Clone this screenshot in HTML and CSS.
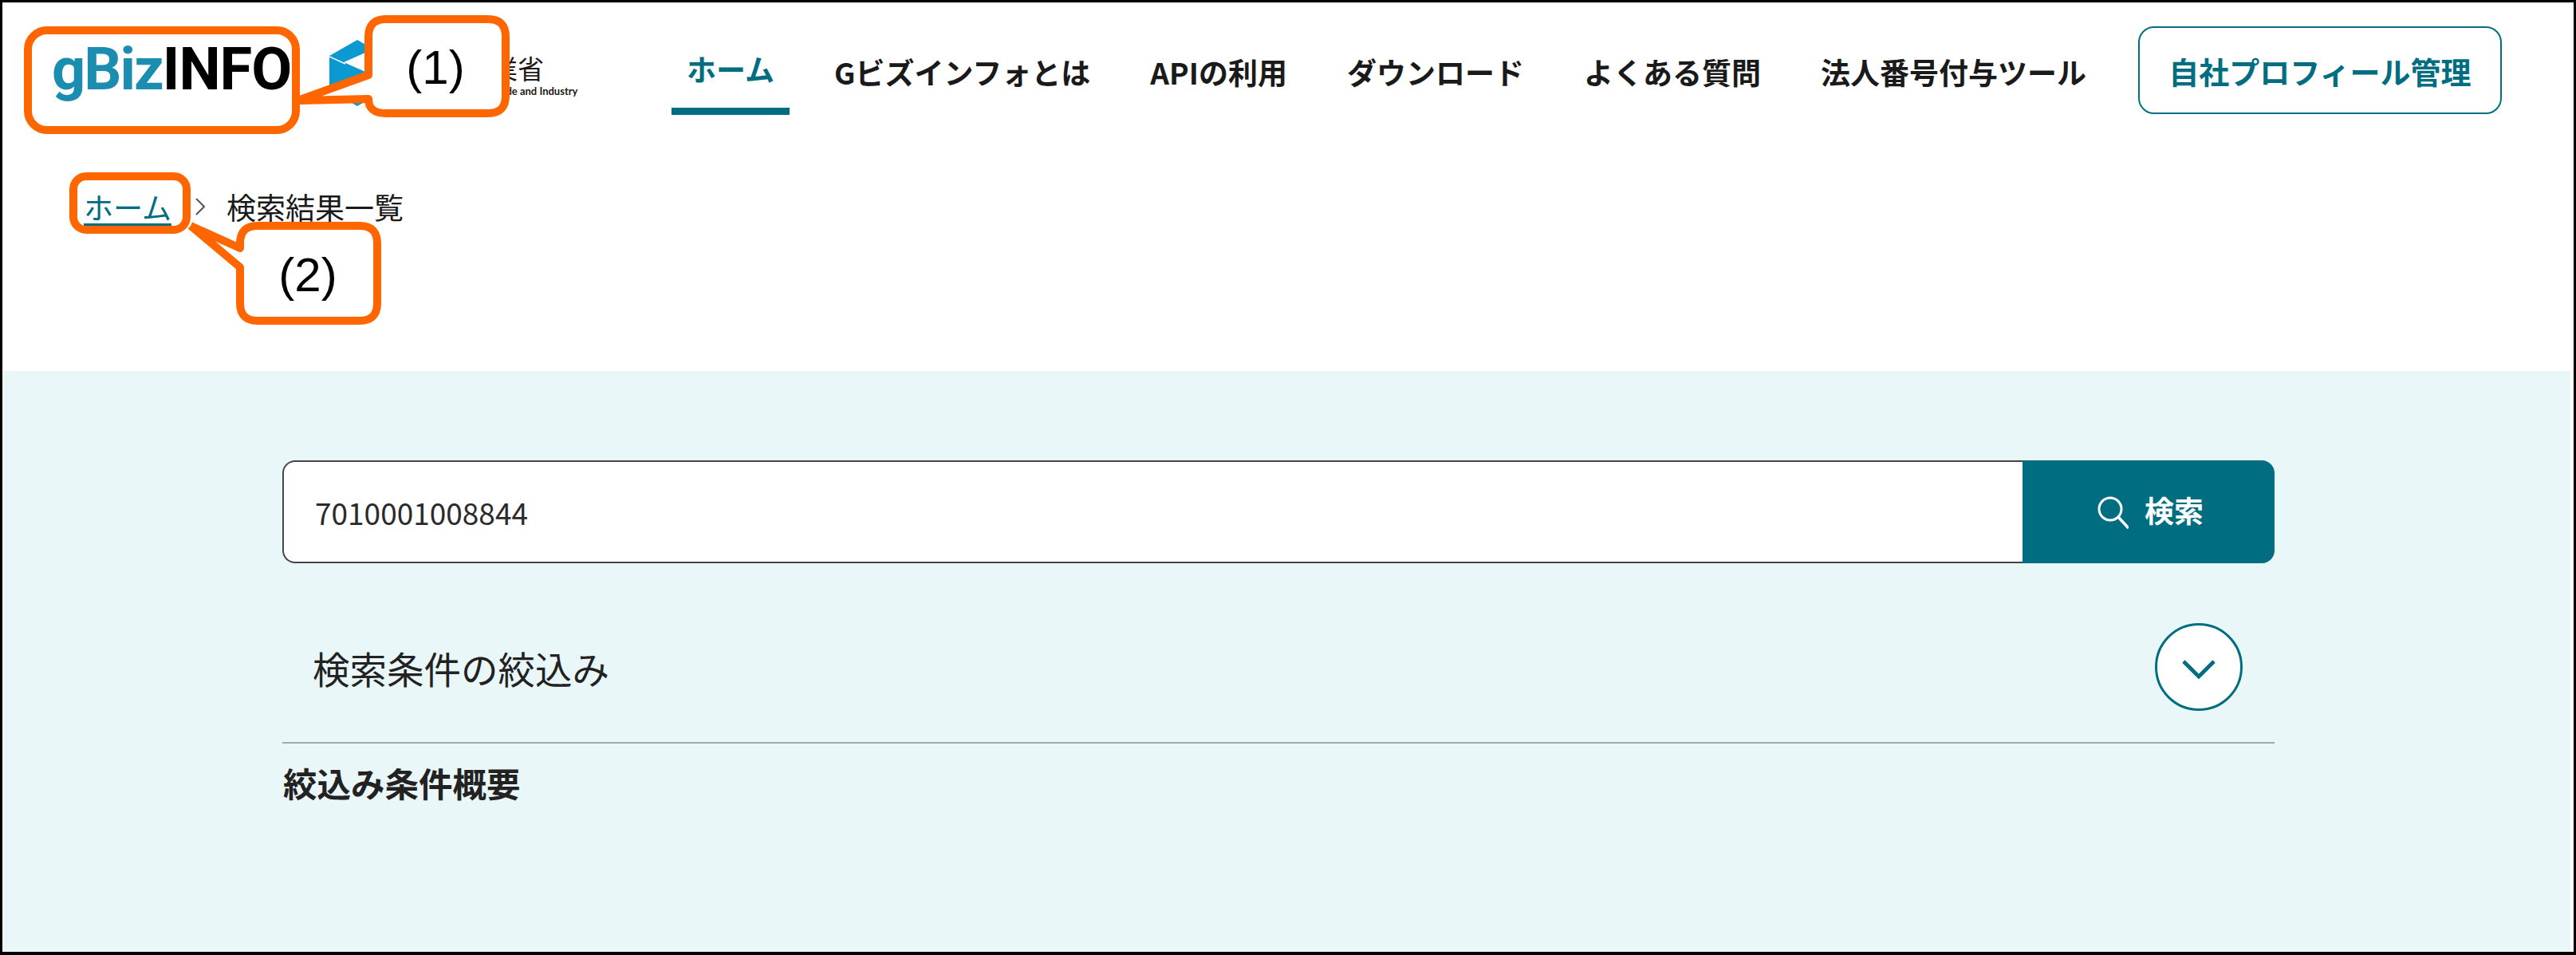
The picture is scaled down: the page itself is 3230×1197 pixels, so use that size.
FILE: index.html
```html
<!DOCTYPE html>
<html lang="ja">
<head>
<meta charset="utf-8">
<title>検索結果一覧</title>
<link rel="stylesheet" href="styles.css">
</head>
<body>
<div class="frame">
  <header class="header">
    <div class="logos">
      <div class="gbiz"><span class="gbiz-a">gBiz</span><span class="gbiz-b">INFO</span></div>
      <div class="meti">
        <svg class="cube" viewBox="0 0 100 84" width="100" height="84" aria-hidden="true">
          <path fill="#0a9ad1" d="M35 0 L70 20 V63 L35 83 L0 63 V20Z"/>
          <path fill="#fff" d="M18 28 L45 16 L70 16 V40 L45 40Z"/>
          <path fill="none" stroke="#fff" stroke-width="1.5" d="M0 21 L20 30"/>
        </svg>
        <div class="meti-text">
          <div class="meti-ja">経済産業省</div>
          <div class="meti-en">Ministry of Economy, Trade and Industry</div>
        </div>
      </div>
    </div>
    <nav class="nav">
      <a class="nav-item active">ホーム</a>
      <a class="nav-item">Gビズインフォとは</a>
      <a class="nav-item">APIの利用</a>
      <a class="nav-item">ダウンロード</a>
      <a class="nav-item">よくある質問</a>
      <a class="nav-item">法人番号付与ツール</a>
    </nav>
    <a class="profile">自社プロフィール管理</a>
  </header>
  <div class="crumbs">
    <a class="crumb-link">ホーム</a>
    <svg class="crumb-sep" viewBox="0 0 12 22" width="12" height="22" aria-hidden="true"><path d="M1 1 L11 11 L1 21" fill="none" stroke="#555" stroke-width="2"/></svg>
    <span class="crumb-current">検索結果一覧</span>
  </div>
  <main class="band">
    <div class="panel">
      <div class="search">
        <div class="search-input">7010001008844</div>
        <button class="search-btn">
          <svg viewBox="0 0 40 44" width="40" height="44" aria-hidden="true"><circle cx="17" cy="18" r="14" fill="none" stroke="#fff" stroke-width="3"/><path d="M27 28 L40 42" stroke="#fff" stroke-width="3.5" fill="none"/></svg>
          <span class="search-label">検索</span>
        </button>
      </div>
      <div class="filter">
        <span class="filter-title">検索条件の絞込み</span>
        <span class="filter-toggle">
          <svg viewBox="0 0 44 26" width="42" height="25" aria-hidden="true"><path d="M2 3 L22 23 L42 3" fill="none" stroke="#006e80" stroke-width="5"/></svg>
        </span>
      </div>
      <h2 class="summary">絞込み条件概要</h2>
    </div>
  </main>
  <svg class="notes" viewBox="0 0 3230 1197" width="3230" height="1197">
    <g class="note-shape">
      <rect class="note-box" x="35" y="38" width="336" height="125" rx="24"/>
      <rect class="note-box" x="92" y="221" width="142" height="67" rx="16"/>
      <path d="M376 125 L462 94 V46 Q462 24 484 24 H612 Q634 24 634 46 V120 Q634 142 612 142 H484 Q462 142 462 124 L376 126"/>
      <path d="M239 283 L301 311 V305 Q301 283 323 283 H451 Q473 283 473 305 V380 Q473 402 451 402 H323 Q301 402 301 380 V335 L239 283"/>
    </g>
    <text class="note-label" x="546" y="105">(1)</text>
    <text class="note-label" x="386" y="365">(2)</text>
  </svg>
</div>
</body>
</html>
```
FILE: styles.css
```css
* { box-sizing: border-box; }
html, body { margin: 0; padding: 0; background: #fff; }
body { font-family: "Noto Sans CJK JP", "Noto Sans", sans-serif; color: #1a1a1a; }
.frame {
  position: relative;
  width: 3230px;
  height: 1197px;
  border: 3px solid #000;
  border-bottom-width: 4px;
  padding-right: 4px;
  display: flex;
  flex-direction: column;
  overflow: hidden;
  background: #fff;
}
.header {
  display: flex;
  align-items: flex-start;
  height: 141px;
  border-top: 2px solid #eceeee;
  padding: 28px 0 0 59px;
}
.logos { display: flex; width: 780px; gap: 41px; }
.gbiz {
  font-family: "Roboto", sans-serif;
  font-weight: 700;
  font-size: 74px;
  line-height: 108px;
  width: 310px;
  padding-left: 3px;
  white-space: nowrap;
}
.gbiz-a { color: #1b8db0; letter-spacing: -2px; }
.gbiz-b { color: #000; letter-spacing: -1px; }
.meti { display: flex; gap: 4px; }
.cube { margin-top: 17px; }
.meti-text { padding-top: 31px; width: 206px; }
.meti-ja { font-size: 33px; line-height: 42px; color: #231815; white-space: nowrap; }
.meti-en { font-size: 13px; line-height: 16px; font-family: "Lato", sans-serif; font-weight: 700; color: #231815; white-space: nowrap; margin-left: -25px; }
.nav { display: flex; font-size: 37px; font-weight: 700; }
.nav-item { display: block; height: 111px; padding: 30px 19px 0; line-height: 54px; color: #1a1a1a; white-space: nowrap; margin-right: 37px; }
.nav-item.active { color: #006e80; border-bottom: 9px solid #006e80; padding-top: 26px; margin-right: 37px; }
.nav-item:last-child { margin-right: 46px; }
.profile {
  display: flex; align-items: center; justify-content: center;
  width: 456px; height: 110px;
  border: 2px solid #00707f;
  border-radius: 20px;
  color: #006e80;
  font-size: 38px;
  font-weight: 700;
  white-space: nowrap;
}
.crumbs {
  display: flex; align-items: center;
  height: 321px;
  padding: 0 0 91px 102px;
  font-size: 37px;
  line-height: 54px;
}
.crumb-link { color: #006e80; text-decoration: underline; text-decoration-thickness: 3px; text-underline-offset: 5px; }
.crumb-sep { margin: 0 27px 0 30px; }
.band { flex: 1; background: #e9f7f9; padding: 112px 371px 0 351px; }
.search { display: flex; height: 129px; }
.search-input {
  flex: 1;
  background: #fff;
  border: 2px solid #444;
  border-right: 0;
  border-radius: 16px 0 0 16px;
  padding-left: 39px;
  display: flex; align-items: center;
  font-size: 37px;
  color: #2b2b2b;
}
.search-btn {
  width: 316px;
  padding: 0 0 0 4px;
  background: #006e80;
  border: 0;
  border-radius: 0 16px 16px 0;
  color: #fff;
  font: 700 37px "Noto Sans CJK JP", sans-serif;
  display: flex; align-items: center; justify-content: center; gap: 20px;
}
.search-label { margin-bottom: 6px; }
.filter {
  display: flex; align-items: center; justify-content: space-between;
  height: 226px;
  border-bottom: 2px solid #a3abab;
  padding: 36px 40px 0 38px;
}
.filter-title { font-size: 46.5px; color: #222; }
.filter-toggle {
  width: 110px; height: 110px;
  border: 3px solid #006e80; border-radius: 50%;
  background: #fff;
  display: flex; align-items: center; justify-content: center;
  padding-top: 4px;
}
.summary { margin: 19px 0 0; padding-left: 1px; font-size: 42.5px; font-weight: 700; line-height: 60px; color: #222; }
.notes { position: absolute; left: -3px; top: -3px; }
.note-shape { fill: #fff; stroke: #ff6600; stroke-width: 10; stroke-linejoin: round; }
.note-box { fill: none; }
.note-label { font-family: "Liberation Sans", sans-serif; font-size: 60px; text-anchor: middle; fill: #000; }
```
